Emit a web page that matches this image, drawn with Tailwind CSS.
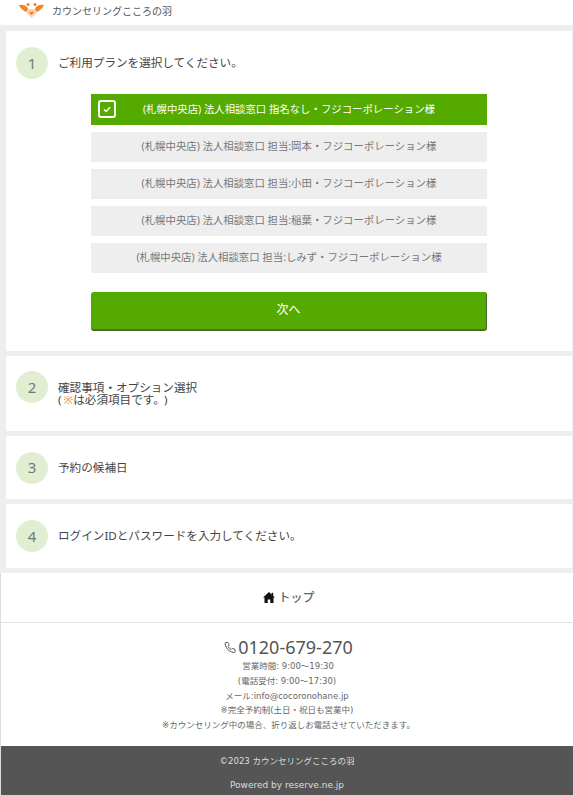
<!DOCTYPE html>
<html lang="ja">
<head>
    <meta charset="UTF-8">
    <meta name="viewport" content="width=device-width, initial-scale=1.0">
    <title>カウンセリングこころの羽</title>
    <script src="https://cdn.jsdelivr.net/npm/@tailwindcss/browser@4"></script>
</head>
<body class="bg-[#eeeeee] text-[#444444] font-['Noto_Sans','Noto_Sans_CJK_JP',sans-serif] h-[795px] overflow-hidden">
    <!-- header -->
    <header class="bg-white h-[25px] flex items-start pl-[19px] pt-[2px]">
        <svg width="25" height="17" viewBox="0 0 25 17">
            <path d="M0 3 Q5 2 8 5 L10 9 Q6 11 4 8 Q1 6 0 3 Z M25 3 Q20 2 17 5 L15 9 Q19 11 21 8 Q24 6 25 3 Z" fill="#f58220"/>
            <circle cx="9" cy="2.500" r="1.500" fill="#f58220"/>
            <circle cx="16" cy="2.500" r="1.500" fill="#f58220"/>
            <path d="M12.500 16 L7.500 11 Q7 6.500 12.500 7 Q18 6.500 17.500 11 Z" fill="#fbd3ae"/>
            <path d="M12.500 13 L10 10.500 Q10.500 8.800 12.500 10 Q14.500 8.800 15 10.500 Z" fill="#f58220"/>
        </svg>
        <span class="ml-[8px] text-[10px] leading-[16px] mt-[1px] text-[#555555]">カウンセリングこころの羽</span>
    </header>

    <main class="pl-[6px] pr-[1px] pt-[6px] flex flex-col gap-[5px]">
        <!-- step 1 -->
        <section class="bg-white h-[320px] pl-[10px] pt-[16px]">
            <div class="flex items-center gap-[10px]">
                <div class="w-8 h-8 rounded-full bg-[#e2eed2] flex items-center justify-center text-[15px] text-[#777777]">1</div>
                <p class="text-[11.6px]">ご利用プランを選択してください。</p>
            </div>
            <div class="mt-[15px] ml-[75px] w-[396px] flex flex-col gap-[7px]">
                <div class="relative h-[31px] bg-[#55aa00] text-white text-[10.4px] flex items-center justify-center">
                    <span class="absolute left-[7px] top-[6px] w-[18px] h-[18px] border-2 border-white rounded-[3px] flex items-center justify-center">
                        <svg width="8" height="7" viewBox="0 0 9 8" fill="none" stroke="white" stroke-width="1.800"><path d="M1 4 L3.500 6.300 L8 1.500"/></svg>
                    </span>
                    (札幌中央店) 法人相談窓口 指名なし・フジコーポレーション様
                </div>
                <div class="h-[30px] bg-[#eeeeee] text-[#777777] text-[10.4px] flex items-center justify-center">(札幌中央店) 法人相談窓口 担当:岡本・フジコーポレーション様</div>
                <div class="h-[30px] bg-[#eeeeee] text-[#777777] text-[10.4px] flex items-center justify-center">(札幌中央店) 法人相談窓口 担当:小田・フジコーポレーション様</div>
                <div class="h-[30px] bg-[#eeeeee] text-[#777777] text-[10.4px] flex items-center justify-center">(札幌中央店) 法人相談窓口 担当:稲葉・フジコーポレーション様</div>
                <div class="h-[30px] bg-[#eeeeee] text-[#777777] text-[10.4px] flex items-center justify-center">(札幌中央店) 法人相談窓口 担当:しみず・フジコーポレーション様</div>
            </div>
            <button class="mt-[19px] ml-[75px] w-[396px] h-[39px] pb-[2px] bg-[#55aa00] text-white text-[12px] rounded-[3px] border-b-2 border-r border-[#4a6b2a] block">次へ</button>
        </section>

        <!-- step 2 -->
        <section class="bg-white h-[75px] pl-[10px] pt-[15px] flex gap-[10px]">
            <div class="w-8 h-8 rounded-full bg-[#e2eed2] flex items-center justify-center text-[15px] text-[#777777]">2</div>
            <p class="text-[11.6px] leading-[12px] mt-[11px]">確認事項・オプション選択<br>(<span class="text-[#f58220] ml-[2px]">※</span>は必須項目です。<span class="ml-[5px]">)</span></p>
        </section>

        <!-- step 3 -->
        <section class="bg-white h-[63px] pl-[10px] flex items-center gap-[10px]">
            <div class="w-8 h-8 rounded-full bg-[#e2eed2] flex items-center justify-center text-[15px] text-[#777777]">3</div>
            <p class="text-[11.6px]">予約の候補日</p>
        </section>

        <!-- step 4 -->
        <section class="bg-white h-[64px] pl-[10px] flex items-center gap-[10px]">
            <div class="w-8 h-8 rounded-full bg-[#e2eed2] flex items-center justify-center text-[15px] text-[#777777]">4</div>
            <p class="text-[11.6px]">ログインIDとパスワードを入力してください。</p>
        </section>
    </main>

    <footer class="mt-[5px] bg-white border-l border-[#dddddd]">
        <div class="h-[50px] flex items-center justify-center gap-[3px] border-b border-[#e5e5e5] text-[12px] font-medium text-[#666666] pl-[4px]">
            <svg width="12" height="11" viewBox="0 0 12 11" fill="#111111"><path d="M6 0 L12 5.500 L10.500 5.500 L10.500 11 L7.300 11 L7.300 7.500 L4.700 7.500 L4.700 11 L1.500 11 L1.500 5.500 L0 5.500 Z"/><rect x="8.600" y="0.800" width="1.600" height="3"/></svg>
            トップ
        </div>
        <div class="h-[123px] flex flex-col items-center pt-[13px] font-['DejaVu_Sans','Noto_Sans_CJK_JP',sans-serif] text-[8.5px] leading-[14.8px] text-[#666666]">
            <div class="flex items-center gap-[2px] font-['Noto_Sans','Noto_Sans_CJK_JP',sans-serif] text-[#555555] text-[18px] leading-[22px] mb-[1px] pl-[3px]">
                <svg width="12" height="13" viewBox="0 0 24 24" fill="none" stroke="#555555" stroke-width="2"><path d="M22 16.900v3a2 2 0 0 1-2.200 2 19.800 19.800 0 0 1-8.600-3.100 19.500 19.500 0 0 1-6-6A19.800 19.800 0 0 1 2.100 4.200 2 2 0 0 1 4.100 2h3a2 2 0 0 1 2 1.700c.1 1 .4 1.900.7 2.800a2 2 0 0 1-.5 2.100L8.100 9.900a16 16 0 0 0 6 6l1.300-1.300a2 2 0 0 1 2.100-.4c.9.3 1.800.6 2.800.7a2 2 0 0 1 1.700 2z"/></svg>
                0120-679-270
            </div>
            <p class="pl-[2px]">営業時間: 9:00～19:30</p>
            <p>(電話受付: 9:00～17:30)</p>
            <p>メール:info@cocoronohane.jp</p>
            <p>※完全予約制(土日・祝日も営業中)</p>
            <p class="pl-[3px]">※カウンセリング中の場合、折り返しお電話させていただきます。</p>
        </div>
        <div class="h-[50px] bg-[#555555] text-[#dddddd] font-['DejaVu_Sans','Noto_Sans_CJK_JP',sans-serif] text-[8.5px] flex flex-col items-center pt-[8px] gap-[9px] leading-[15px]">
            <p>©2023 カウンセリングこころの羽</p>
            <p class="text-[9px]">Powered by reserve.ne.jp</p>
        </div>
    </footer>
</body>
</html>
